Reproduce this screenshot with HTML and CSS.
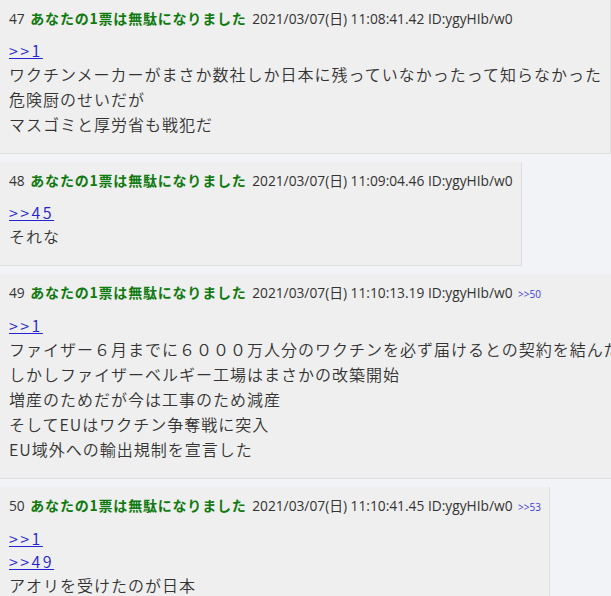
FILE: index.html
```html
<!DOCTYPE html>
<html lang="ja">
<head>
  <meta charset="UTF-8" />
  <meta name="viewport" content="width=device-width, initial-scale=1.0"/>
  <title>スレッド</title>
  <link rel="stylesheet" href="styles.css">
</head>
<body>

  <div class="thread">
    <div class="post" id="47">
      <div class="meta">
        <span class="number">47</span>
        <span class="name"><b>あなたの1票は無駄になりました</b></span>
        <span class="date">2021/03/07(日) 11:08:41.42</span>
        <span class="uid">ID:ygyHIb/w0</span>
      </div>
      <div class="message"><a href="#1">&gt;&gt;1</a><br><span class="text">ワクチンメーカーがまさか数社しか日本に残っていなかったって知らなかった<br>危険厨のせいだが<br>マスゴミと厚労省も戦犯だ</span></div>
    </div>

    <div class="post" id="48">
      <div class="meta">
        <span class="number">48</span>
        <span class="name"><b>あなたの1票は無駄になりました</b></span>
        <span class="date">2021/03/07(日) 11:09:04.46</span>
        <span class="uid">ID:ygyHIb/w0</span>
      </div>
      <div class="message"><a href="#45">&gt;&gt;45</a><br><span class="text">それな</span></div>
    </div>

    <div class="post" id="49">
      <div class="meta">
        <span class="number">49</span>
        <span class="name"><b>あなたの1票は無駄になりました</b></span>
        <span class="date">2021/03/07(日) 11:10:13.19</span>
        <span class="uid">ID:ygyHIb/w0</span>
        <span class="back-links"><a href="#50">&gt;&gt;50</a></span>
      </div>
      <div class="message"><a href="#1">&gt;&gt;1</a><br><span class="text">ファイザー６月までに６０００万人分のワクチンを必ず届けるとの契約を結んだ<br>しかしファイザーベルギー工場はまさかの改築開始<br>増産のためだが今は工事のため減産<br>そしてEUはワクチン争奪戦に突入<br>EU域外への輸出規制を宣言した</span></div>
    </div>

    <div class="post" id="50">
      <div class="meta">
        <span class="number">50</span>
        <span class="name"><b>あなたの1票は無駄になりました</b></span>
        <span class="date">2021/03/07(日) 11:10:41.45</span>
        <span class="uid">ID:ygyHIb/w0</span>
        <span class="back-links"><a href="#53">&gt;&gt;53</a></span>
      </div>
      <div class="message"><a href="#1">&gt;&gt;1</a><br><a href="#49">&gt;&gt;49</a><br><span class="text">アオリを受けたのが日本</span></div>
    </div>
  </div>

</body>
</html>
```

FILE: styles.css
```css
html, body {
  overflow: hidden;
}

body {
  margin: 0;
  background: #f2f3f7;
  color: #333;
  font-family: "Open Sans", "Noto Sans CJK JP", sans-serif;
}

.post {
  width: max-content;
  margin-bottom: 8px;
  padding: 8px 8px 16px 9px;
  background-color: #efefef;
  border-bottom: 1px solid #ddd;
  border-right: 1px solid #ddd;
}

.meta {
  font-size: 13.75px;
  line-height: 22px;
  white-space: nowrap;
}

.meta .name {
  color: #0f7a0f;
  font-family: "Noto Sans CJK JP", sans-serif;
  font-size: 14px;
  line-height: 20px;
  letter-spacing: 0.8px;
  margin: 0 2px;
}

.back-links a {
  font-size: 10px;
  color: #3a3ad6;
  text-decoration: none;
  margin-left: 2px;
}

.message {
  margin-top: 9px;
  font-family: "Noto Sans CJK JP", sans-serif;
  font-size: 16px;
  font-weight: 350;
  line-height: 23px;
  letter-spacing: 1px;
  white-space: nowrap;
}

.message .text {
  line-height: 25px;
}

.message a {
  color: #2323d0;
  letter-spacing: 2.5px;
}
```
